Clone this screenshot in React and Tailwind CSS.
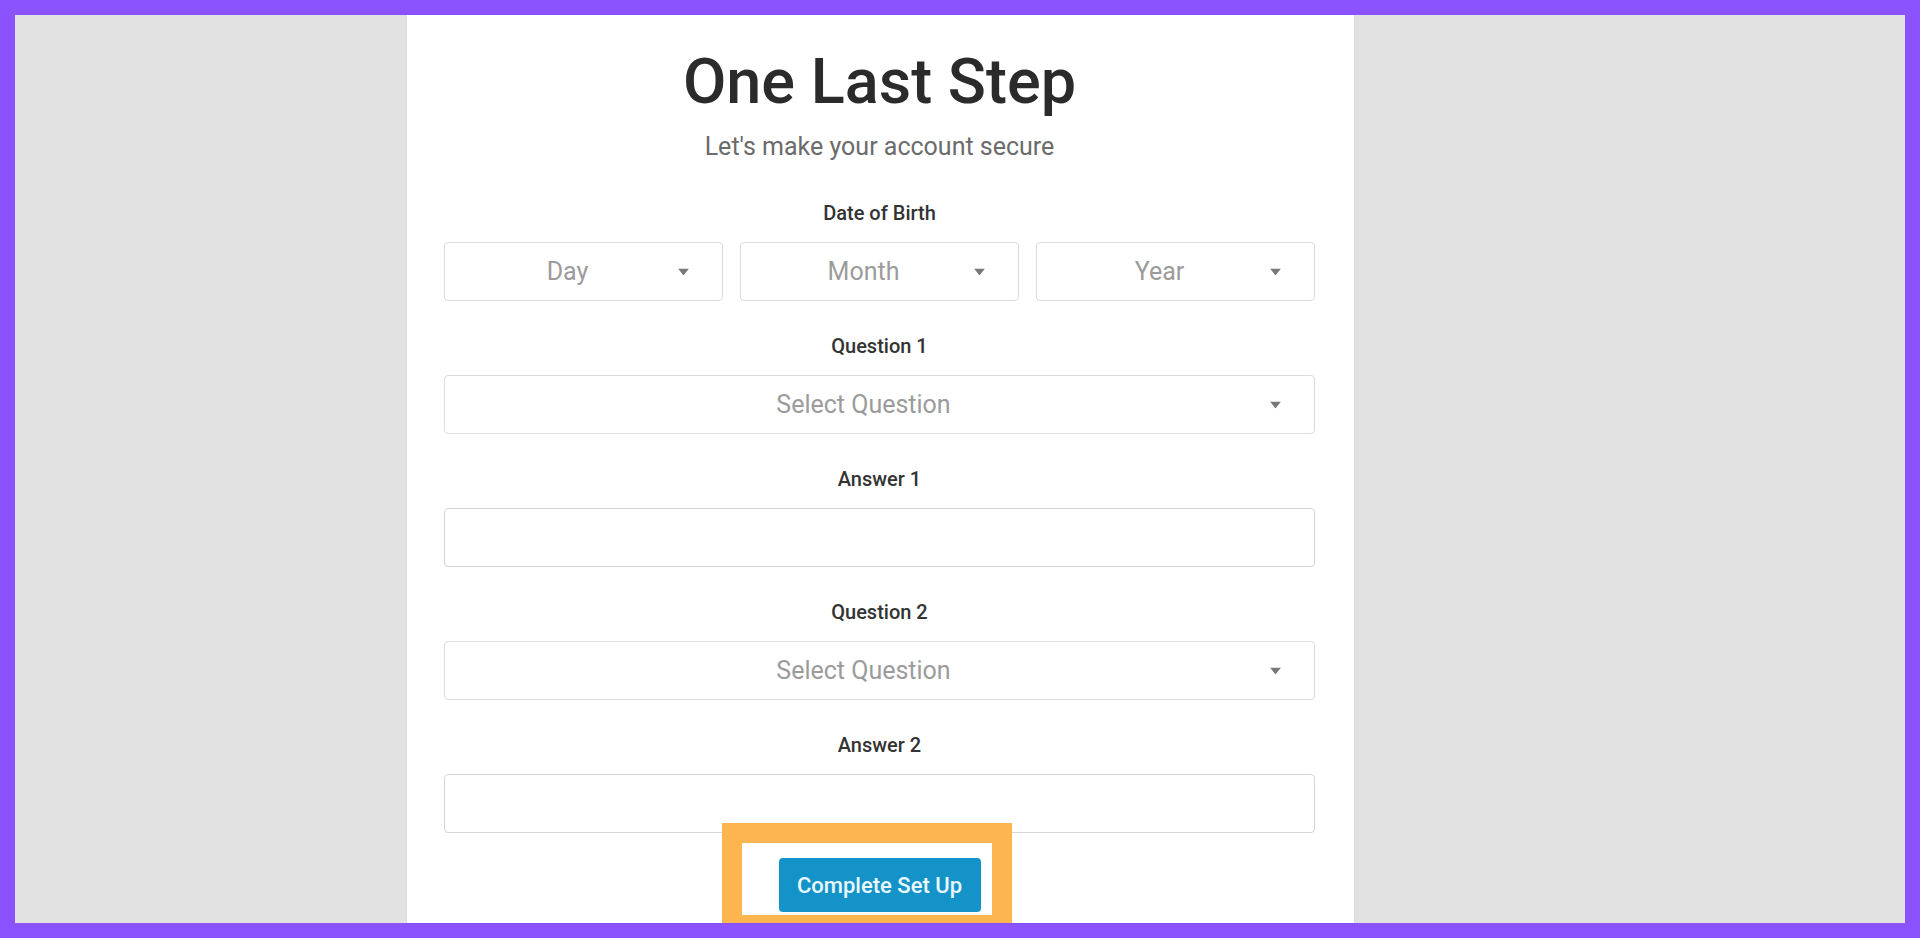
const font = { fontFamily: 'Roboto, "Liberation Sans", sans-serif' };

function Caret() {
  return (
    <svg width="11" height="7" viewBox="0 0 11 7" className="absolute right-[33px] top-1/2 -translate-y-1/2">
      <path d="M0 0 L11 0 L5.5 7 Z" fill="#777777" />
    </svg>
  );
}

function SelectBox({ placeholder }) {
  return (
    <div className="relative flex h-[59px] items-center rounded-[4px] border border-[#dcdcdc] bg-white">
      <span className="w-full pr-[32px] text-center text-[25px] text-[#9b9b9b]">{placeholder}</span>
      <Caret />
    </div>
  );
}

function Label({ children }) {
  return (
    <div className="text-center text-[20px] font-medium leading-[22px] text-[#333333]">
      {children}
    </div>
  );
}

function Field({ label, children, first }) {
  return (
    <div className={first ? '' : 'mt-[34px]'}>
      <Label>{label}</Label>
      <div className="mt-[18px]">{children}</div>
    </div>
  );
}

export default function App() {
  return (
    <div className="h-[938px] w-full bg-[#8b53fe] p-[15px]" style={font}>
      <div className="flex h-[908px] bg-[#e2e2e2]">
        <div className="relative ml-[392px] h-full w-[947px] overflow-hidden bg-white pl-[37px] pr-[39px] pt-[35px] shadow-[0_0_2px_rgba(0,0,0,0.08)]">
          <h1 className="text-center text-[63px] font-medium leading-[63px] text-[#2b2b2b]">One Last Step</h1>
          <p className="mt-[19px] text-center text-[25px] leading-[30px] text-[#6b6b6b]">
            Let's make your account secure
          </p>

          <div className="mt-[40px]">
            <Field label="Date of Birth" first>
              <div className="grid grid-cols-3 gap-[17px]">
                <SelectBox placeholder="Day" />
                <SelectBox placeholder="Month" />
                <SelectBox placeholder="Year" />
              </div>
            </Field>
            <Field label="Question 1">
              <SelectBox placeholder="Select Question" />
            </Field>
            <Field label="Answer 1">
              <div className="h-[59px] rounded-[4px] border border-[#d6d6d6] bg-white" />
            </Field>
            <Field label="Question 2">
              <SelectBox placeholder="Select Question" />
            </Field>
            <Field label="Answer 2">
              <div className="h-[59px] rounded-[4px] border border-[#d6d6d6] bg-white" />
            </Field>
          </div>

          <div className="mt-[25px] flex justify-center">
            <button className="h-[54px] w-[202px] rounded-[4px] bg-[#1493c9] text-[22px] font-medium text-[#eaf8ff]">
              Complete Set Up
            </button>
          </div>

          {/* highlight annotation */}
          <div className="pointer-events-none absolute left-[315px] top-[808px] h-[112px] w-[290px] border-[20px] border-[#fdb54f]" />
        </div>
      </div>
    </div>
  );
}
